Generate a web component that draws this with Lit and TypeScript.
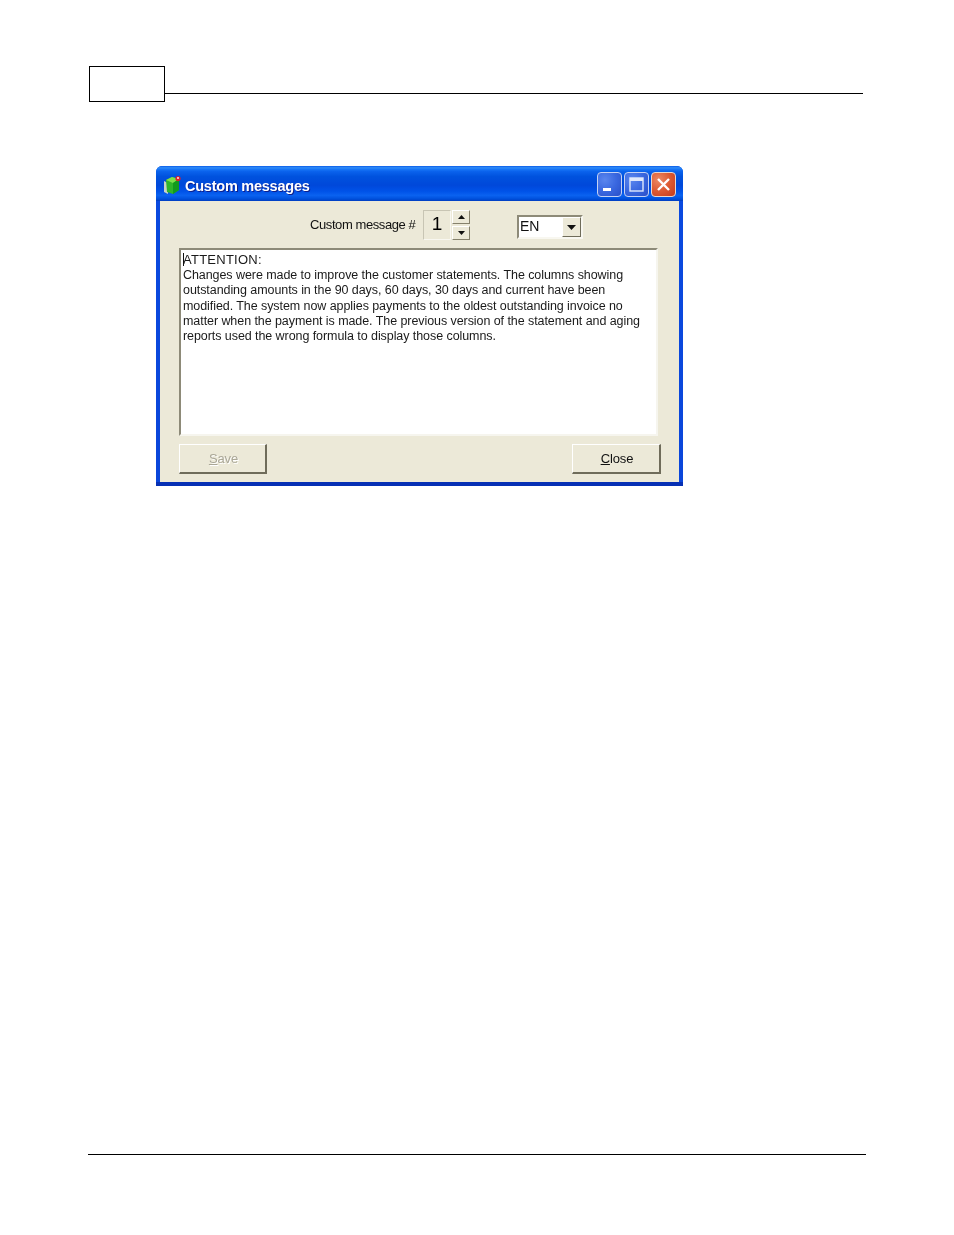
import { LitElement, html, css } from "lit";
import { customElement } from "lit/decorators.js";

const LINES = [
  "Changes were made to improve the customer statements. The columns showing",
  "outstanding amounts in the 90 days, 60 days, 30 days and current have been",
  "modified. The system now applies payments to the oldest outstanding invoice no",
  "matter when the payment is made. The previous version of the statement and aging",
  "reports used the wrong formula to display those columns.",
];

@customElement("app-root")
export class AppRoot extends LitElement {
  static styles = css`
    :host { display: block; width: 954px; height: 1235px; background: #fff; font-family: "Liberation Sans", Arial, sans-serif; overflow: hidden; }
    .head { display: flex; padding: 66px 91px 0 89px; height: 36px; box-sizing: content-box; }
    .box { width: 74px; height: 34px; border: 1px solid #000; }
    .rule { flex: 1; height: 1px; background: #000; margin-top: 27px; }
    .win { margin: 64px 0 0 156px; width: 527px; height: 320px; box-sizing: border-box; display: flex; flex-direction: column; background: linear-gradient(180deg, #0a4ae0 0, #0a46da 98.6%, #0630b4 98.7%, #0630b4 100%); border-radius: 6px 6px 0 0; filter: blur(0.4px); }
    .title { height: 35px; flex: none; display: flex; align-items: center; padding: 2px 7px 0 7px; box-sizing: border-box; gap: 3px; border-radius: 6px 6px 0 0;
      background: linear-gradient(180deg, #0a5ce8 0, #2f8bf8 5%, #1673f5 10%, #0a62ec 16%, #0052de 30%, #0048da 55%, #0052e8 72%, #0a62f0 84%, #0050dc 94%, #003cc0 100%); }
    .title-text { color: #fff; font: bold 14.5px "Liberation Sans", Arial, sans-serif; letter-spacing: -0.24px; text-shadow: 1px 1px 0 #0f1f8a; flex: 1; margin-top: 3px; }
    .btns { display: flex; gap: 2px; }
    .wb { width: 25px; height: 25px; box-sizing: border-box; border: 1px solid #c4d2f4; border-radius: 4px; background: radial-gradient(circle at 30% 30%, #5a86ee 0, #3a68e0 50%, #2a4fc8 100%); display: block; }
    .wb.close { border-color: #e8d8d0; background: radial-gradient(circle at 30% 30%, #ec8a66 0, #dd5a32 50%, #c43a1c 100%); }
    .client { flex: 1; margin: 0 4px 4px; background: #ece9d8; display: flex; flex-direction: column; align-items: stretch; }
    .row { height: 30px; margin-top: 9px; display: flex; padding-left: 150px; flex: none; }
    .label { font-size: 13px; letter-spacing: -0.41px; color: #111; line-height: 30px; width: 113px; white-space: nowrap; }
    .spin-val { width: 28px; height: 30px; box-sizing: border-box; border: 1px solid; border-color: #c8c5b4 #f8f7f0 #f8f7f0 #c8c5b4; font-size: 19px; line-height: 25px; text-align: center; color: #000; }
    .spin { margin-left: 1px; width: 18px; display: flex; flex-direction: column; justify-content: space-between; height: 30px; }
    .arrow { height: 14px; box-sizing: border-box; background: #ece9d8; border: 1px solid; border-color: #fff #85816c #85816c #fff; display: flex; align-items: center; justify-content: center; }
    .combo { margin: 5px 0 0 47px; width: 66px; height: 24px; box-sizing: border-box; border: 2px solid; border-color: #8d8a78 #f8f7f0 #f8f7f0 #8d8a78; background: #fff; display: flex; }
    .combo-text { flex: 1; font-size: 14px; line-height: 18px; padding-left: 1px; color: #111; letter-spacing: -0.1px; }
    .combo-btn { width: 19px; height: 20px; box-sizing: border-box; background: #ece9d8; border: 1px solid; border-color: #fff #6f6c5a #6f6c5a #fff; display: flex; align-items: center; justify-content: center; }
    .memo { margin: 8px 21px 0 19px; height: 188px; box-sizing: border-box; flex: none; background: #fff; border: 2px solid; border-color: #8d8a78 #f6f5ee #f6f5ee #8d8a78; padding: 3px 0 0 2px; font-size: 12.5px; line-height: 15.2px; letter-spacing: -0.07px; color: #1a1a1a; white-space: nowrap; }
    .first { position: relative; top: -1px; letter-spacing: 0.25px; font-size: 13px; }
    .first::before { content: ""; position: absolute; left: 0; top: 1px; width: 1px; height: 13px; background: #111; }
    .actions { margin: 8px 18px 0 19px; display: flex; justify-content: space-between; }
    .btn { width: 89px; height: 30px; box-sizing: border-box; border: 1px solid; border-color: #fff #6f6c5a #6f6c5a #fff; border-width: 1px 2px 2px 1px; background: #ece9d8; font-size: 13px; letter-spacing: -0.1px; display: flex; align-items: center; justify-content: center; color: #111; padding-left: 2px; }
    .btn.off { color: #aaa797; text-shadow: 1px 1px 0 #fff; width: 88px; }
    u { text-underline-offset: 1px; }
    .foot { height: 1px; width: 778px; margin: 668px 0 0 88px; background: #000; }
  `;

  render() {
    return html`
      <div class="head"><div class="box"></div><div class="rule"></div></div>
      <div class="win">
        <div class="title">
          <svg width="19" height="20" viewBox="0 0 19 20" style="flex:none">
            <path d="M1 6 L1 17 L5 19 L5 8 Z" fill="#c9d2c6"/>
            <path d="M3 5 L9 2 L16 4 L16 15 L10 19 L4 17 Z" fill="#2fb52a"/>
            <path d="M3 5 L9 2 L16 4 L10 8 Z" fill="#7fe04a"/>
            <path d="M10 8 L16 4 L16 15 L10 19 Z" fill="#129a1e"/>
            <circle cx="15" cy="3.5" r="2.6" fill="#e0202c"/>
            <circle cx="15" cy="3" r="0.9" fill="#fff"/>
          </svg>
          <div class="title-text">Custom messages</div>
          <div class="btns">
            <svg class="wb" viewBox="0 0 23 23"><rect x="5" y="15" width="8" height="3" fill="#fff"/></svg>
            <svg class="wb" viewBox="0 0 23 23"><rect x="5" y="5" width="13" height="13" fill="none" stroke="#dfe8fb" stroke-width="1.4"/><rect x="5" y="5" width="13" height="3" fill="#dfe8fb"/></svg>
            <svg class="wb close" viewBox="0 0 23 23"><path d="M6 6 L17 17 M17 6 L6 17" stroke="#fff" stroke-width="2.4" fill="none"/></svg>
          </div>
        </div>
        <div class="client">
          <div class="row">
            <div class="label">Custom message #</div>
            <div class="spin-val">1</div>
            <div class="spin">
              <div class="arrow"><svg width="7" height="4"><path d="M3.5 0 L7 4 L0 4 Z" fill="#111"/></svg></div>
              <div class="arrow"><svg width="7" height="4"><path d="M0 0 L7 0 L3.5 4 Z" fill="#111"/></svg></div>
            </div>
            <div class="combo">
              <div class="combo-text">EN</div>
              <div class="combo-btn"><svg width="9" height="5"><path d="M0 0 L9 0 L4.5 5 Z" fill="#111"/></svg></div>
            </div>
          </div>
          <div class="memo">
            <div class="first">ATTENTION:</div>
            ${LINES.map((l) => html`<div>${l}</div>`)}
          </div>
          <div class="actions">
            <div class="btn off"><span><u>S</u>ave</span></div>
            <div class="btn"><span><u>C</u>lose</span></div>
          </div>
        </div>
      </div>
      <div class="foot"></div>
    `;
  }
}
